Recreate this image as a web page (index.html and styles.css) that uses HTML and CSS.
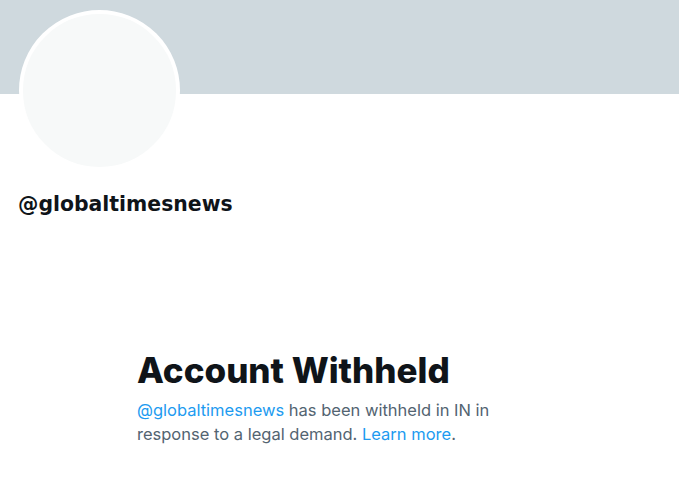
FILE: index.html
```html
<!DOCTYPE html>
<html lang="en">

<head>
    <meta charset="UTF-8">
    <meta name="viewport" content="width=device-width, initial-scale=1.0">
    <link rel="stylesheet" href="styles.css">
    <title>@globaltimesnews</title>
</head>

<body>
    <div class="banner"></div>

    <div class="profile">
        <div class="avatar"></div>
        <div class="handle">@globaltimesnews</div>
    </div>

    <div class="withheld">
        <h1>Account Withheld</h1>
        <p><a href="#">@globaltimesnews</a> has been withheld in IN in response to a legal demand. <a href="#">Learn more</a>.</p>
    </div>
</body>

</html>
```

FILE: styles.css
```css
body {
    margin: 0;
    background-color: #ffffff;
    font-family: Inter, "Liberation Sans", sans-serif;
    color: #0f1419;
}

.banner {
    height: 94px;
    background-color: #cfd9de;
}

.profile {
    padding: 0 18px;
}

.avatar {
    width: 153px;
    height: 153px;
    margin-top: -84px;
    margin-left: 1px;
    border: 4px solid #ffffff;
    border-radius: 50%;
    background-color: #f7f9f9;
}

.handle {
    margin-top: 21px;
    font-family: "DejaVu Sans", Inter, sans-serif;
    font-size: 20.4px;
    font-weight: 700;
    line-height: 24px;
}

.withheld {
    width: 405px;
    margin: 134px auto 0;
}

h1 {
    margin: 0;
    font-size: 35px;
    font-weight: 800;
    line-height: 40px;
}

p {
    margin: 8px 0 0;
    font-size: 16.5px;
    line-height: 24px;
    color: #536471;
}

a {
    color: #1d9bf0;
    text-decoration: none;
}
```
